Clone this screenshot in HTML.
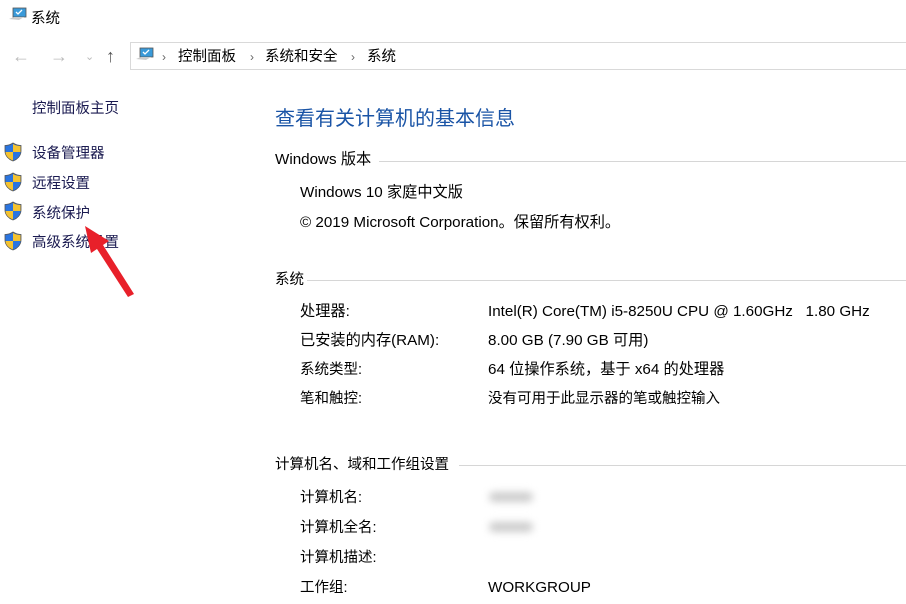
<!DOCTYPE html>
<html><head><meta charset="utf-8"><style>
body{margin:0;width:906px;height:604px;background:#fff;position:relative;overflow:hidden;font-family:"Liberation Sans","Noto Sans CJK SC",sans-serif;color:#000;}
.a{position:absolute;white-space:nowrap;font-size:14.5px;line-height:18px;margin-top:2px;}
.w{font-size:15.2px;}
.nav{color:#1a1a50;}
.hd{color:#1a54a6;font-size:20px;line-height:24px;}
.line{position:absolute;height:1px;background:#d6d6d6;}
.blur{position:absolute;width:44px;height:10px;background:#ccc;border-radius:6px;filter:blur(4px);}
</style></head><body>
<svg class="a" style="left:8px;top:4px" width="20" height="18" viewBox="0 0 20 18"><rect x="5" y="2" width="13" height="9" fill="#3a9ad9" stroke="#555" stroke-width="0.8"/><path d="M8 6l2 2 4-4" stroke="#fff" fill="none" stroke-width="1.3"/><path d="M1 13l5-2h10l-5 3z" fill="#ccc"/></svg>
<div class="a" style="left:31px;top:8px">系统</div>
<div class="a" style="left:12px;top:45px;color:#bbb;font-size:18px">←</div>
<div class="a" style="left:50px;top:45px;color:#bbb;font-size:18px">→</div>
<div class="a" style="left:85px;top:46px;color:#bbb;font-size:11px">⌄</div>
<div class="a" style="left:106px;top:45px;color:#555;font-size:18px">↑</div>
<div style="position:absolute;left:130px;top:42px;width:790px;height:26px;border:1px solid #d9d9d9"></div>
<svg class="a" style="left:135px;top:44px" width="20" height="18" viewBox="0 0 20 18"><rect x="5" y="2" width="13" height="9" fill="#3a9ad9" stroke="#555" stroke-width="0.8"/><path d="M8 6l2 2 4-4" stroke="#fff" fill="none" stroke-width="1.3"/><path d="M1 13l5-2h10l-5 3z" fill="#ccc"/></svg>
<div class="a" style="left:162px;top:46px;color:#666;font-size:12px">›</div>
<div class="a" style="left:178px;top:46px">控制面板</div>
<div class="a" style="left:250px;top:46px;color:#666;font-size:12px">›</div>
<div class="a" style="left:265px;top:46px">系统和安全</div>
<div class="a" style="left:351px;top:46px;color:#666;font-size:12px">›</div>
<div class="a" style="left:367px;top:46px">系统</div>

<div class="a nav" style="left:32px;top:98px">控制面板主页</div>
<svg width="0" height="0" style="position:absolute"><defs><symbol id="sh" viewBox="0 0 18 20"><path d="M9 1C6 3 3 3.5 1 3.5V9c0 5 4 8.5 8 10 4-1.5 8-5 8-10V3.5C15 3.5 12 3 9 1z" fill="#2f6fd6" stroke="#555" stroke-width="0.8"/><path d="M9 2v8H1.5V4c2 0 5-.5 7.5-2z" fill="#2a75e0"/><path d="M9 2c2.5 1.5 5.5 2 7.5 2v6H9z" fill="#f5c330"/><path d="M1.5 10H9v8.5C5 17 1.6 14 1.5 10z" fill="#f5c330"/><path d="M9 10h7.5c0 4-3.5 7-7.5 8.5z" fill="#2a75e0"/></symbol></defs></svg>
<svg style="position:absolute;left:4px;top:142px" width="18" height="20"><use href="#sh"/></svg>
<svg style="position:absolute;left:4px;top:172px" width="18" height="20"><use href="#sh"/></svg>
<svg style="position:absolute;left:4px;top:201px" width="18" height="20"><use href="#sh"/></svg>
<svg style="position:absolute;left:4px;top:231px" width="18" height="20"><use href="#sh"/></svg>
<div class="a nav" style="left:32px;top:143px">设备管理器</div>
<div class="a nav" style="left:32px;top:173px">远程设置</div>
<div class="a nav" style="left:32px;top:203px">系统保护</div>
<div class="a nav" style="left:32px;top:232px">高级系统设置</div>
<svg style="position:absolute;left:0;top:0" width="200" height="320"><path d="M85 226L109 241L103 245L134 294L128 297L97 249L91 253Z" fill="#e8202a"/></svg>

<div class="a hd" style="left:275px;top:105px">查看有关计算机的基本信息</div>
<div class="a w" style="left:275px;top:149px">Windows 版本</div><div class="line" style="left:379px;top:161px;width:527px"></div>
<div class="a w" style="left:300px;top:182px">Windows 10 家庭中文版</div>
<div class="a w" style="left:300px;top:212px">© 2019 Microsoft Corporation。保留所有权利。</div>
<div class="a" style="left:275px;top:269px">系统</div><div class="line" style="left:307px;top:280px;width:599px"></div>
<div class="a w" style="left:300px;top:301px">处理器:</div><div class="a w" style="left:488px;top:301px">Intel(R) Core(TM) i5-8250U CPU @ 1.60GHz &nbsp; 1.80 GHz</div>
<div class="a w" style="left:300px;top:330px">已安装的内存(RAM):</div><div class="a w" style="left:488px;top:330px">8.00 GB (7.90 GB 可用)</div>
<div class="a" style="left:300px;top:359px">系统类型:</div><div class="a w" style="left:488px;top:359px">64 位操作系统，基于 x64 的处理器</div>
<div class="a" style="left:300px;top:388px">笔和触控:</div><div class="a" style="left:488px;top:388px">没有可用于此显示器的笔或触控输入</div>
<div class="a" style="left:275px;top:454px">计算机名、域和工作组设置</div><div class="line" style="left:459px;top:465px;width:447px"></div>
<div class="a" style="left:300px;top:487px">计算机名:</div><div class="blur" style="left:489px;top:492px"></div>
<div class="a" style="left:300px;top:517px">计算机全名:</div><div class="blur" style="left:489px;top:522px"></div>
<div class="a" style="left:300px;top:547px">计算机描述:</div>
<div class="a" style="left:300px;top:577px">工作组:</div><div class="a w" style="left:488px;top:577px">WORKGROUP</div>
</body></html>
